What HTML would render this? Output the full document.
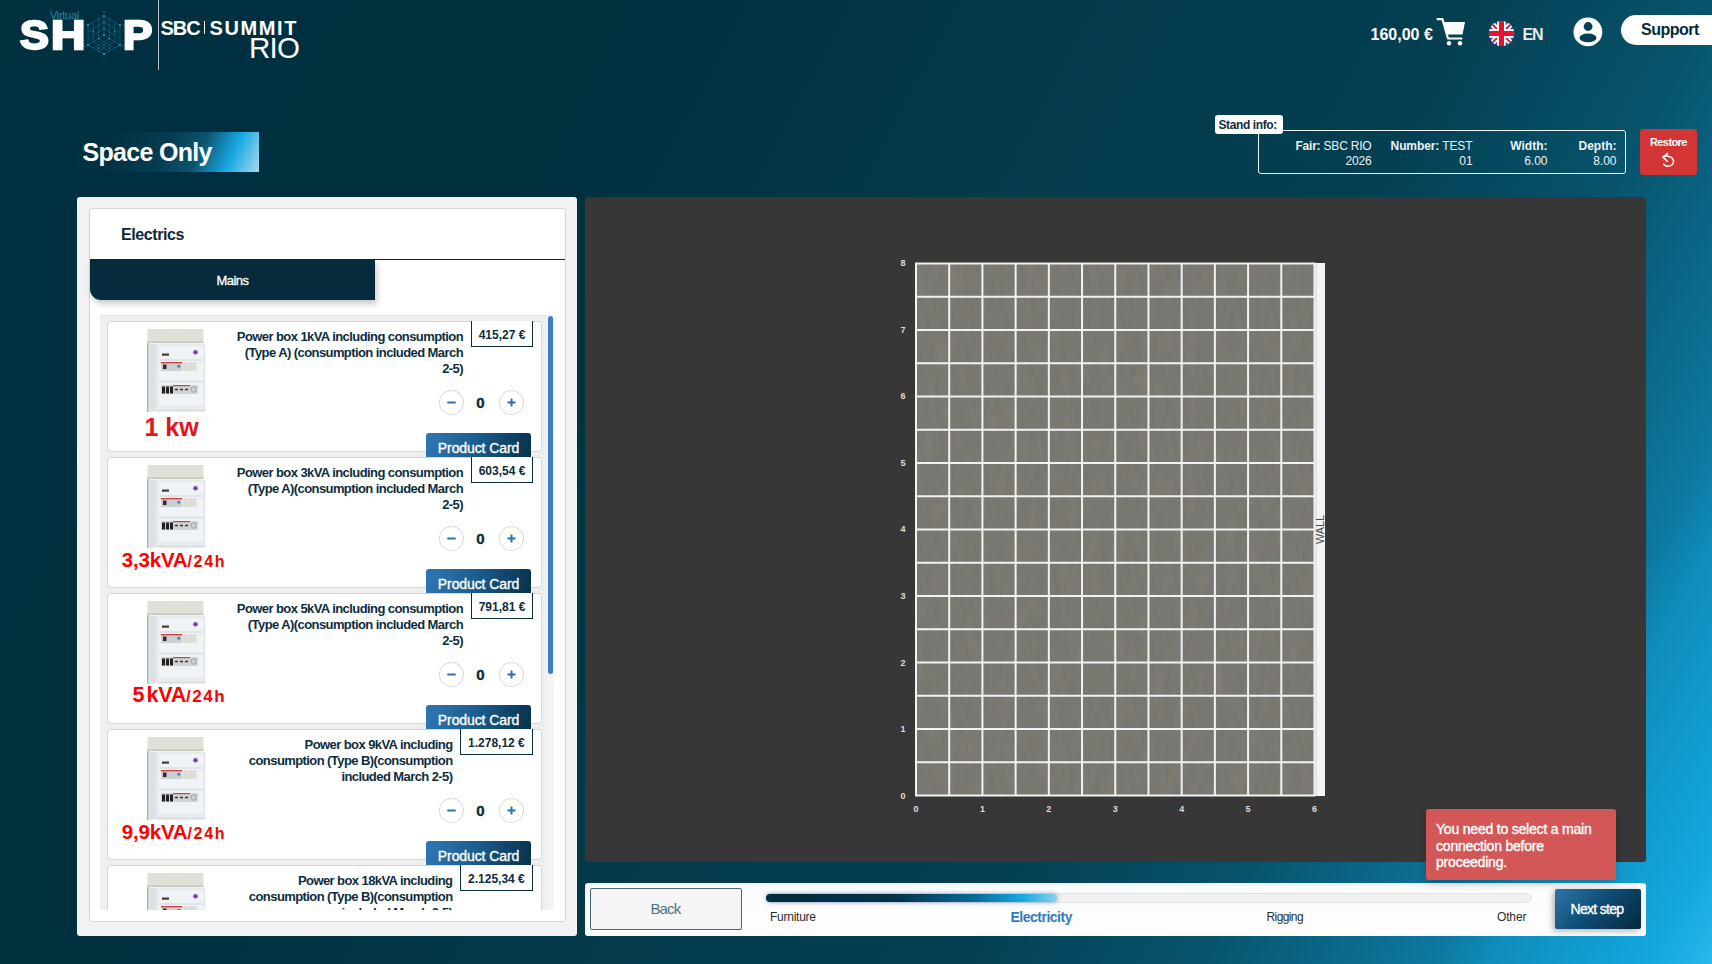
<!DOCTYPE html>
<html><head><meta charset="utf-8">
<style>
*{box-sizing:border-box;margin:0;padding:0}
html,body{width:1712px;height:964px;overflow:hidden}
body{position:relative;font-family:"Liberation Sans",sans-serif;
background:linear-gradient(118deg,#01313f 0%,#00303f 14%,#002f3e 27%,#033a4a 48%,#033e4f 59%,#043f52 66%,#07546c 77%,#0e78a0 87.5%,#0f8dbc 90%,#13a8de 97.3%,#2ab8ea 100%);}
.abs{position:absolute}
.t{white-space:nowrap}
.card{width:435px;height:131px;background:#fff;border-radius:4px;box-shadow:inset 0 0 0 1px #d6d6d6}
.ttl{font-size:13px;font-weight:700;line-height:16px;text-align:right;color:#0c2d3e;letter-spacing:-0.58px;white-space:nowrap}
.price{top:0;height:26px;border:1px solid #0c2d3e;border-top:none;font-size:12px;font-weight:700;line-height:1;padding-top:7.7px;text-align:center;color:#0c2d3e;white-space:nowrap;background:#fff}
.qbtn{width:25px;height:25px;border-radius:50%;box-shadow:inset 0 0 0 1px #d9d9d9;background:#fff}
.qbtn svg{display:block}
.qnum{top:73.6px;width:20px;text-align:center;font-size:15px;font-weight:700;line-height:1;color:#0c2d3e;-webkit-text-stroke:0.4px #0c2d3e}
.pcbtn{left:319px;top:112px;width:105px;height:24px;border-radius:3px 3px 0 0;background:linear-gradient(100deg,#2f77b3 0%,#1d5e91 45%,#07324b 100%);color:#fff;font-size:14px;-webkit-text-stroke:0.35px #fff;letter-spacing:-0.1px;line-height:1;padding-top:8.2px;text-align:center;white-space:nowrap}
</style></head><body>

<svg width="0" height="0" style="position:absolute">
<defs>
<g id="ebox">
  <rect x="0.5" y="0" width="56" height="14" fill="#e0e0d8"/>
  <rect x="0.5" y="12.5" width="56" height="1.5" fill="#c4c4b8"/>
  <path d="M0 14 L9 15 L9 82.5 L0 83 Z" fill="#dce1e4"/>
  <rect x="0" y="14" width="1.2" height="69" fill="#a9afb3"/>
  <rect x="9" y="14.5" width="49.5" height="68" fill="#eaeef1"/>
  <rect x="10.5" y="16" width="46.5" height="62" fill="#f0f3f6" stroke="#dde2e6" stroke-width="0.8"/>
  <rect x="15" y="24.5" width="7" height="2.2" fill="#3d3d3d"/>
  <circle cx="48.5" cy="23.3" r="2.3" fill="#7d40c8"/>
  <rect x="11" y="30" width="46" height="2" fill="#dfe4e8"/>
  <rect x="14" y="33" width="21" height="9" fill="#cdd0d2"/>
  <rect x="14" y="33" width="21" height="1.3" fill="#d23a3a"/>
  <rect x="16" y="35.5" width="3.5" height="4.5" fill="#2a2a2a"/>
  <rect x="30.5" y="36" width="2.5" height="2.5" fill="#3a78c8"/>
  <rect x="35" y="33" width="15" height="9" fill="#e2e2dc"/>
  <path d="M38 33 V42 M41 33 V42 M44 33 V42 M47 33 V42" stroke="#d0d0c8" stroke-width="0.6"/>
  <rect x="11" y="51.5" width="46" height="2.2" fill="#dfe4e8"/>
  <rect x="14" y="56" width="37" height="9" fill="#d0d2d4"/>
  <rect x="15" y="57.5" width="3" height="7" fill="#222"/>
  <rect x="19" y="57.5" width="3" height="7" fill="#222"/>
  <rect x="23" y="57.5" width="3" height="7" fill="#222"/>
  <rect x="26" y="56" width="17" height="1.2" fill="#d24040"/>
  <path d="M28 60.5 H31 M33 60.5 H36 M38 60.5 H41" stroke="#333" stroke-width="1.6"/>
  <circle cx="46.5" cy="60.5" r="2.6" fill="none" stroke="#8a8a8a" stroke-width="0.7"/>
  <rect x="10" y="80.5" width="48.5" height="2" fill="#d8dde0"/>
</g>
</defs></svg>
<!-- HEADER -->
<div id="logo" class="abs" style="left:0;top:0;width:310px;height:72px">
  <div class="abs t" style="left:50px;top:9.5px;font-size:11px;color:#1d86b8;letter-spacing:-0.3px;line-height:1">Virtual</div>
  <div class="abs t" style="left:20px;top:15px;font-size:40px;font-weight:700;color:#fff;line-height:1;-webkit-text-stroke:2.3px #fff;transform:scaleX(1.08);transform-origin:0 0">S</div>
  <div class="abs t" style="left:51px;top:15px;font-size:40px;font-weight:700;color:#fff;line-height:1;-webkit-text-stroke:2.3px #fff;transform:scaleX(1.19);transform-origin:0 0">H</div>
  <div class="abs t" style="left:123px;top:15px;font-size:40px;font-weight:700;color:#fff;line-height:1;-webkit-text-stroke:2.3px #fff;transform:scaleX(1.1);transform-origin:0 0">P</div>
  <svg class="abs" style="left:82px;top:10px" width="44" height="50" viewBox="0 0 44 50">
    <g stroke="#1b8ec4" stroke-width="0.6" fill="none" opacity="0.6">
      <path d="M22 6 L6 15 L6 35 L22 44 L38 35 L38 15 Z"/>
      <path d="M22 6 L22 25 M22 25 L6 35 M22 25 L38 35"/>
      <path d="M11.3 12 L11.3 31.7 M16.7 9 L16.7 28.7 M27.3 9 L27.3 28.7 M32.7 12 L32.7 31.7"/>
      <path d="M6 21.7 L22 12.3 M6 28.3 L22 18.7 M38 21.7 L22 12.3 M38 28.3 L22 18.7"/>
      <path d="M11.3 31.7 L27.3 41 M16.7 28.7 L32.7 38 M32.7 31.7 L16.7 41 M27.3 28.7 L11.3 38"/>
    </g>
    <g fill="#2aa6dc">
      <circle cx="22" cy="6" r="1"/><circle cx="6" cy="15" r="0.9"/><circle cx="38" cy="15" r="0.9"/>
      <circle cx="6" cy="35" r="0.9"/><circle cx="38" cy="35" r="0.9"/><circle cx="22" cy="44" r="1"/>
      <circle cx="22" cy="25" r="1"/><circle cx="16.7" cy="28.7" r="0.8"/><circle cx="27.3" cy="28.7" r="0.8"/>
      <circle cx="22" cy="18.7" r="0.8"/><circle cx="22" cy="12.3" r="0.8"/><circle cx="32.7" cy="21.7" r="0.8"/>
      <circle cx="11.3" cy="21.7" r="0.8"/><circle cx="22" cy="35" r="0.8"/><circle cx="27.3" cy="38" r="0.8"/>
      <circle cx="16.7" cy="38" r="0.8"/><circle cx="3" cy="36" r="0.6"/><circle cx="41" cy="36" r="0.6"/>
      <circle cx="22" cy="2" r="0.6"/><circle cx="22" cy="48" r="0.6"/><circle cx="2" cy="15" r="0.6"/><circle cx="42" cy="15" r="0.6"/>
    </g>
  </svg>
  <div class="abs" style="left:158px;top:0;width:1px;height:70px;background:#b8c4ca"></div>
  <div class="abs t" style="left:160.5px;top:17.5px;font-size:20px;font-weight:700;color:#fff;line-height:1;letter-spacing:-1px">SBC</div>
  <div class="abs" style="left:204px;top:21px;width:1.2px;height:13px;background:#fff"></div>
  <div class="abs t" style="left:209.5px;top:17.5px;font-size:20px;font-weight:700;color:#fff;line-height:1;letter-spacing:1.6px">SUMMIT</div>
  <div class="abs t" style="left:249px;top:32.5px;font-size:29.5px;font-weight:400;color:#fff;line-height:1;letter-spacing:-0.8px">RIO</div>
</div>

<div id="hdr-right">
  <div class="abs t" style="left:1370.5px;top:26.8px;font-size:16px;font-weight:700;color:#fff;line-height:1;letter-spacing:0px">160,00 €</div>
  <svg class="abs" style="left:1436px;top:17px" width="31" height="30" viewBox="0 0 31 30">
    <path d="M1.5 2.2 H6.5 L12 21.5 H25.5" stroke="#fff" stroke-width="2.2" fill="none" stroke-linecap="round" stroke-linejoin="round"/>
    <path d="M7.5 5 H29 L26.5 17.5 H11 Z" fill="#fff"/>
    <circle cx="13" cy="26.3" r="2.2" fill="#fff"/><circle cx="24" cy="26.3" r="2.2" fill="#fff"/>
  </svg>
  <svg class="abs" style="left:1488px;top:20px" width="27" height="27" viewBox="0 0 27 27">
    <defs><clipPath id="fc"><circle cx="13.5" cy="13.5" r="12.6"/></clipPath></defs>
    <g clip-path="url(#fc)">
      <rect width="27" height="27" fill="#3b4aa6"/>
      <path d="M0 0 L27 27 M27 0 L0 27" stroke="#fff" stroke-width="5.5"/>
      <path d="M0 0 L13.5 13.5 M27 27 L13.5 13.5 M27 0 L13.5 13.5 M0 27 L13.5 13.5" stroke="#e8112d" stroke-width="1.8"/>
      <rect x="9.2" y="0" width="8.6" height="27" fill="#fff"/><rect x="0" y="9.2" width="27" height="8.6" fill="#fff"/>
      <rect x="11" y="0" width="5" height="27" fill="#e8112d"/><rect x="0" y="11" width="27" height="5" fill="#e8112d"/>
    </g>
  </svg>
  <div class="abs t" style="left:1522.5px;top:26.8px;font-size:16px;font-weight:700;color:#e8e8e8;line-height:1;letter-spacing:-1.2px">EN</div>
  <svg class="abs" style="left:1573px;top:17px" width="30" height="30" viewBox="0 0 30 30">
    <circle cx="14.9" cy="14.9" r="14.4" fill="#fff"/>
    <circle cx="15.1" cy="9.5" r="4.4" fill="#063f54"/>
    <ellipse cx="15" cy="20.9" rx="8.5" ry="4.3" fill="#063f54"/>
  </svg>
  <div class="abs" style="left:1621px;top:15px;width:120px;height:29.5px;background:#fff;border-radius:15px"></div>
  <div class="abs t" style="left:1641px;top:21.6px;font-size:16px;font-weight:700;color:#062a3a;line-height:1;letter-spacing:-0.5px">Support</div>
</div>

<!-- TITLE -->
<div class="abs" style="left:77px;top:132px;width:182px;height:40px;background:linear-gradient(115deg,rgba(2,45,62,0) 0%,rgba(4,52,70,0.6) 25%,#063d53 49%,#0b5572 66%,#19a8e2 83%,#a4dcef 100%)"></div>
<div class="abs t" style="left:82.5px;top:140.3px;font-size:25px;font-weight:700;color:#fff;line-height:1;letter-spacing:-0.7px">Space Only</div>

<!-- STAND INFO -->
<div id="stand">
  <div class="abs" style="left:1258px;top:130px;width:368px;height:44px;border:1px solid #f2f5f7;border-radius:3px"></div>
  <div class="abs" style="left:1215px;top:115px;width:68px;height:19px;background:#fff;border-radius:3px"></div>
  <div class="abs t" style="left:1218.5px;top:118.7px;font-size:12px;font-weight:700;color:#0e2e3e;line-height:1;letter-spacing:-0.4px">Stand info:</div>
  <div class="abs" style="left:1200px;top:138.6px;width:171.5px;text-align:right;font-size:12px;line-height:15px;color:#eef2f4;letter-spacing:-0.2px"><b>Fair:</b> SBC RIO<br>2026</div>
  <div class="abs" style="left:1300px;top:138.6px;width:172.5px;text-align:right;font-size:12px;line-height:15px;color:#eef2f4;letter-spacing:-0.1px"><b>Number:</b> TEST<br>01</div>
  <div class="abs" style="left:1450px;top:138.6px;width:97.5px;text-align:right;font-size:12px;line-height:15px;color:#eef2f4"><b>Width:</b><br>6.00</div>
  <div class="abs" style="left:1520px;top:138.6px;width:96.5px;text-align:right;font-size:12px;line-height:15px;color:#eef2f4"><b>Depth:</b><br>8.00</div>
  <div class="abs" style="left:1640px;top:129px;width:57px;height:46px;background:#d33535;border-radius:3px"></div>
  <div class="abs t" style="left:1650px;top:137.2px;font-size:11px;font-weight:700;color:#fff;line-height:1;letter-spacing:-0.6px">Restore</div>
  <svg class="abs" style="left:1656px;top:149px" width="24" height="20" viewBox="0 0 24 20">
    <path d="M7 8.2 C11.5 5.5 17.8 8.5 17.5 12.8 C17.2 17.5 10.5 18.5 7.6 15.2" stroke="#fff" stroke-width="1.5" fill="none" stroke-linecap="round"/>
    <path d="M11.6 4.4 L6.9 8.1 L11.3 12.3" stroke="#fff" stroke-width="1.5" fill="none" stroke-linecap="round" stroke-linejoin="round"/>
  </svg>
</div>

<!-- LEFT PANEL -->
<div class="abs" style="left:77px;top:197px;width:500px;height:739px;background:#f2f2f2;border-radius:3px"></div>
<div class="abs" style="left:89px;top:208px;width:477px;height:714px;background:#fff;border:1px solid #d6d6d6;border-radius:3px"></div>
<div class="abs t" style="left:121px;top:226.5px;font-size:16px;font-weight:700;color:#0c2a3a;line-height:1;letter-spacing:-0.4px">Electrics</div>
<div class="abs" style="left:90px;top:258.5px;width:475px;height:1.5px;background:#0b2b3b"></div>
<div class="abs" style="left:90px;top:259px;width:285px;height:41px;background:#062b3d;border-bottom-left-radius:11px;box-shadow:2px 4px 6px rgba(0,0,0,0.22)"></div>
<div class="abs t" style="left:90px;top:274px;width:285px;text-align:center;font-size:13px;color:#fff;line-height:1;letter-spacing:-0.5px;-webkit-text-stroke:0.3px #fff">Mains</div>
<div class="abs" style="left:100px;top:315px;width:454px;height:595px;background:#efefef;box-shadow:inset 0 1px 0 #e2e2e2;overflow:hidden;border-radius:2px">
  <div class="abs" style="left:447px;top:0;width:7px;height:595px;background:#f4f4f4"></div>
  <div class="abs" style="left:448px;top:1px;width:5px;height:358px;background:#3a7fc1;border-radius:3px"></div>

  <div class="abs card" style="left:7px;top:6px">
    <svg class="abs" style="left:40px;top:8px" width="59" height="83"><use href="#ebox"/></svg>
    <div class="abs t" style="left:37.5px;top:93.5px;font-size:25px;font-weight:700;color:#e8121c;line-height:1">1 kw</div>
    <div class="abs ttl" style="left:0;top:7.5px;width:356px">Power box 1kVA including consumption<br>(Type A) (consumption included March<br>2-5)</div>
    <div class="abs price" style="left:364px;width:62px">415,27 €</div>
    <div class="abs qbtn" style="left:331.5px;top:69px"><svg width="25" height="25"><path d="M8.3 12.5 H16.7" stroke="#2f6fb0" stroke-width="2"/></svg></div>
    <div class="abs qnum" style="left:363.5px">0</div>
    <div class="abs qbtn" style="left:391.5px;top:69px"><svg width="25" height="25"><path d="M8.5 12.5 H16.5 M12.5 8.5 V16.5" stroke="#2f6fb0" stroke-width="2"/></svg></div>
    <div class="abs pcbtn">Product Card</div>
  </div>
  <div class="abs card" style="left:7px;top:142px">
    <svg class="abs" style="left:40px;top:8px" width="59" height="83"><use href="#ebox"/></svg>
    <div class="abs t" style="left:14.8px;top:93.3px;font-size:20.5px;font-weight:700;color:#f00;line-height:1;letter-spacing:-0.2px">3,3kVA<span style="font-size:16px;letter-spacing:1.7px">/24h</span></div>
    <div class="abs ttl" style="left:0;top:7.5px;width:356px">Power box 3kVA including consumption<br>(Type A)(consumption included March<br>2-5)</div>
    <div class="abs price" style="left:364px;width:62px">603,54 €</div>
    <div class="abs qbtn" style="left:331.5px;top:69px"><svg width="25" height="25"><path d="M8.3 12.5 H16.7" stroke="#2f6fb0" stroke-width="2"/></svg></div>
    <div class="abs qnum" style="left:363.5px">0</div>
    <div class="abs qbtn" style="left:391.5px;top:69px"><svg width="25" height="25"><path d="M8.5 12.5 H16.5 M12.5 8.5 V16.5" stroke="#2f6fb0" stroke-width="2"/></svg></div>
    <div class="abs pcbtn">Product Card</div>
  </div>
  <div class="abs card" style="left:7px;top:278px">
    <svg class="abs" style="left:40px;top:8px" width="59" height="83"><use href="#ebox"/></svg>
    <div class="abs t" style="left:25.5px;top:91.6px;font-size:21.5px;font-weight:700;color:#f00;line-height:1;letter-spacing:-0.2px"><span style="letter-spacing:2px">5</span>kVA<span style="font-size:17px;letter-spacing:1.5px">/24h</span></div>
    <div class="abs ttl" style="left:0;top:7.5px;width:356px">Power box 5kVA including consumption<br>(Type A)(consumption included March<br>2-5)</div>
    <div class="abs price" style="left:364px;width:62px">791,81 €</div>
    <div class="abs qbtn" style="left:331.5px;top:69px"><svg width="25" height="25"><path d="M8.3 12.5 H16.7" stroke="#2f6fb0" stroke-width="2"/></svg></div>
    <div class="abs qnum" style="left:363.5px">0</div>
    <div class="abs qbtn" style="left:391.5px;top:69px"><svg width="25" height="25"><path d="M8.5 12.5 H16.5 M12.5 8.5 V16.5" stroke="#2f6fb0" stroke-width="2"/></svg></div>
    <div class="abs pcbtn">Product Card</div>
  </div>
  <div class="abs card" style="left:7px;top:414px">
    <svg class="abs" style="left:40px;top:8px" width="59" height="83"><use href="#ebox"/></svg>
    <div class="abs t" style="left:14.8px;top:92.5px;font-size:20.5px;font-weight:700;color:#f00;line-height:1;letter-spacing:-0.2px">9,9kVA<span style="font-size:16px;letter-spacing:1.7px">/24h</span></div>
    <div class="abs ttl" style="left:0;top:7.5px;width:345.5px">Power box 9kVA including<br>consumption (Type B)(consumption<br>included March 2-5)</div>
    <div class="abs price" style="left:352.8px;width:73.2px">1.278,12 €</div>
    <div class="abs qbtn" style="left:331.5px;top:69px"><svg width="25" height="25"><path d="M8.3 12.5 H16.7" stroke="#2f6fb0" stroke-width="2"/></svg></div>
    <div class="abs qnum" style="left:363.5px">0</div>
    <div class="abs qbtn" style="left:391.5px;top:69px"><svg width="25" height="25"><path d="M8.5 12.5 H16.5 M12.5 8.5 V16.5" stroke="#2f6fb0" stroke-width="2"/></svg></div>
    <div class="abs pcbtn">Product Card</div>
  </div>
  <div class="abs card" style="left:7px;top:550px">
    <svg class="abs" style="left:40px;top:8px" width="59" height="83"><use href="#ebox"/></svg>
    <div class="abs ttl" style="left:0;top:7.5px;width:345.5px">Power box 18kVA including<br>consumption (Type B)(consumption<br>included March 2-5)</div>
    <div class="abs price" style="left:352.8px;width:73.2px">2.125,34 €</div>
    <div class="abs qbtn" style="left:331.5px;top:69px"><svg width="25" height="25"><path d="M8.3 12.5 H16.7" stroke="#2f6fb0" stroke-width="2"/></svg></div>
    <div class="abs qnum" style="left:363.5px">0</div>
    <div class="abs qbtn" style="left:391.5px;top:69px"><svg width="25" height="25"><path d="M8.5 12.5 H16.5 M12.5 8.5 V16.5" stroke="#2f6fb0" stroke-width="2"/></svg></div>
    <div class="abs pcbtn">Product Card</div>
  </div>
</div>

<!-- CANVAS -->
<div class="abs" style="left:585px;top:197px;width:1061px;height:665px;background:#373737;border-radius:3px"></div>
<svg class="abs" style="left:0;top:0" width="1712" height="964" viewBox="0 0 1712 964">
  <defs>
    <filter id="tex" x="0" y="0" width="100%" height="100%" color-interpolation-filters="sRGB">
      <feTurbulence type="fractalNoise" baseFrequency="0.2 0.06" numOctaves="3" seed="11" result="n1"/>
      <feColorMatrix in="n1" type="matrix" values="0 0 0 0 0.42  0 0 0 0 0.45  0 0 0 0 0.46  0 0 1.5 0 -0.7" result="cool"/>
      <feTurbulence type="fractalNoise" baseFrequency="0.08 0.03" numOctaves="2" seed="3" result="n2"/>
      <feColorMatrix in="n2" type="matrix" values="0 0 0 0 0.54  0 0 0 0 0.51  0 0 0 0 0.47  1.3 0 0 0 -0.6" result="warm"/>
      <feMerge result="m"><feMergeNode in="warm"/><feMergeNode in="cool"/></feMerge>
      <feComposite in="m" in2="SourceGraphic" operator="in"/>
    </filter>
  </defs>
  <rect x="916.0" y="263.5" width="398.5" height="532.1" fill="#7a7871"/>
  <rect x="916.0" y="263.5" width="398.5" height="532.1" fill="#000" filter="url(#tex)" opacity="0.9"/>
  <rect x="1315" y="263" width="10" height="533" fill="#f4f4f4"/>
  <rect x="1315" y="263" width="1.6" height="533" fill="#d6d6d6"/>
  <path d="M916.00 262.50 V796.60 M949.21 262.50 V796.60 M982.42 262.50 V796.60 M1015.62 262.50 V796.60 M1048.83 262.50 V796.60 M1082.04 262.50 V796.60 M1115.25 262.50 V796.60 M1148.46 262.50 V796.60 M1181.67 262.50 V796.60 M1214.88 262.50 V796.60 M1248.08 262.50 V796.60 M1281.29 262.50 V796.60 M1314.50 262.50 V796.60 M915.00 263.50 H1315.50 M915.00 296.76 H1315.50 M915.00 330.01 H1315.50 M915.00 363.27 H1315.50 M915.00 396.52 H1315.50 M915.00 429.78 H1315.50 M915.00 463.04 H1315.50 M915.00 496.29 H1315.50 M915.00 529.55 H1315.50 M915.00 562.81 H1315.50 M915.00 596.06 H1315.50 M915.00 629.32 H1315.50 M915.00 662.58 H1315.50 M915.00 695.83 H1315.50 M915.00 729.09 H1315.50 M915.00 762.34 H1315.50 M915.00 795.60 H1315.50" stroke="#f2f2f2" stroke-width="2" fill="none"/>
  <g font-family="Liberation Sans" font-size="9" font-weight="700" fill="#dedede"><text x="903" y="798.5" text-anchor="middle">0</text><text x="903" y="732.0" text-anchor="middle">1</text><text x="903" y="665.5" text-anchor="middle">2</text><text x="903" y="599.0" text-anchor="middle">3</text><text x="903" y="532.4" text-anchor="middle">4</text><text x="903" y="465.9" text-anchor="middle">5</text><text x="903" y="399.4" text-anchor="middle">6</text><text x="903" y="332.9" text-anchor="middle">7</text><text x="903" y="266.4" text-anchor="middle">8</text><text x="916.0" y="811.8" text-anchor="middle">0</text><text x="982.4" y="811.8" text-anchor="middle">1</text><text x="1048.8" y="811.8" text-anchor="middle">2</text><text x="1115.2" y="811.8" text-anchor="middle">3</text><text x="1181.7" y="811.8" text-anchor="middle">4</text><text x="1248.1" y="811.8" text-anchor="middle">5</text><text x="1314.5" y="811.8" text-anchor="middle">6</text></g>
  <text x="0" y="0" transform="translate(1324.2 529.5) rotate(-90)" text-anchor="middle" font-family="Liberation Sans" font-size="10.8" fill="#4a4a4a">WALL</text>
</svg>

<!-- BOTTOM BAR -->
<div class="abs" style="left:585px;top:883px;width:1061px;height:53px;background:linear-gradient(180deg,#ececec 0px,#fbfcfc 4px,#fdfdfd 100%);border-radius:3px"></div>
<div class="abs" style="left:590px;top:888px;width:152px;height:42px;background:#f5f5f5;border:1px solid #46697b;border-radius:2px"></div>
<div class="abs t" style="left:650.5px;top:901.4px;font-size:15px;color:#4d7386;line-height:1;letter-spacing:-0.9px">Back</div>
<div class="abs" style="left:766px;top:893px;width:766px;height:9.5px;background:#f1f1f1;border:1px solid #e2e2e2;border-radius:5px"></div>
<div class="abs" style="left:766px;top:894px;width:291px;height:7.5px;border-radius:4px;background:linear-gradient(90deg,#022b3e 0%,#03344a 45%,#0b6a98 72%,#16a8e2 88%,#8ad3ea 100%);box-shadow:0 0 4px 1px rgba(40,90,170,0.35)"></div>
<div class="abs t" style="left:770px;top:910.8px;font-size:12px;color:#2e2e2e;line-height:1;letter-spacing:-0.25px">Furniture</div>
<div class="abs t" style="left:1010.5px;top:910.1px;font-size:14px;font-weight:700;color:#2f7bbf;line-height:1;letter-spacing:-0.5px">Electricity</div>
<div class="abs t" style="left:1266.5px;top:910.8px;font-size:12px;color:#2e2e2e;line-height:1;letter-spacing:-0.6px">Rigging</div>
<div class="abs t" style="left:1497px;top:910.8px;font-size:12px;color:#2e2e2e;line-height:1;letter-spacing:-0.15px">Other</div>
<div class="abs" style="left:1555px;top:889px;width:86px;height:40px;border-radius:2px;background:linear-gradient(135deg,#2f74aa 0%,#0f4f78 45%,#03283c 100%);box-shadow:-2px 2px 6px rgba(0,0,0,0.3)"></div>
<div class="abs t" style="left:1570.5px;top:902.2px;font-size:14px;color:#fff;line-height:1;letter-spacing:-0.7px;-webkit-text-stroke:0.35px #fff">Next step</div>

<!-- TOAST -->
<div class="abs" style="left:1426px;top:809px;width:190px;height:71px;background:#d45757;border-radius:3px;box-shadow:0 3px 8px rgba(0,0,0,0.2)"></div>
<div class="abs" style="left:1436px;top:820.6px;font-size:14px;line-height:16.9px;color:#fff;letter-spacing:-0.2px;white-space:nowrap;-webkit-text-stroke:0.35px #fff">You need to select a main<br>connection before<br>proceeding.</div>

</body></html>
